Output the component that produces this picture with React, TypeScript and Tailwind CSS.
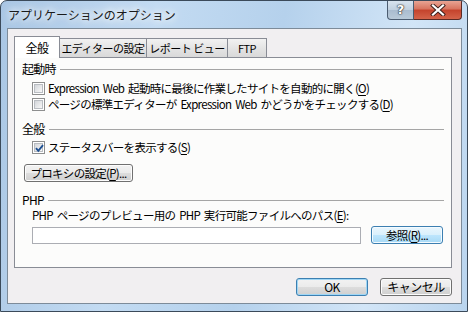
import React from 'react';

// mnemonic letter, underlined like a Win32 dialog
const U = ({ c }: { c: string }) => <span className="underline underline-offset-[2px] decoration-1">{c}</span>;

const CheckBox = ({ checked }: { checked?: boolean }) => (
  <span className="relative w-[13px] h-[13px] shrink-0 border border-[#8e8f8f] bg-white p-[1px]">
    <span className="block w-full h-full border border-[#b9bdc2] bg-gradient-to-br from-[#d3d6da] to-[#f8f8f8]" />
    {checked && (
      <svg className="absolute inset-0" width="13" height="13" viewBox="0 0 13 13">
        <path d="M3 6.2 L5.3 8.8 L10 3.2" stroke="#1d4f91" strokeWidth="1.9" fill="none" />
      </svg>
    )}
  </span>
);

const Section = ({ label, className }: { label: string; className?: string }) => (
  <div className={`flex items-center h-[16px] pl-[7px] pr-[7px] ${className ?? ''}`}>
    <span className="whitespace-nowrap text-[12px]">{label}</span>
    <span className="flex-1 h-px bg-[#a5a5a5] ml-[4px]" />
  </div>
);

const Btn = ({ children, className }: { children: React.ReactNode; className?: string }) => (
  <div
    className={`flex items-center justify-center whitespace-nowrap h-[18px] rounded-[3px] border border-[#707070] bg-[linear-gradient(#f2f2f2_0%,#ebebeb_50%,#dddddd_50%,#cfcfcf_100%)] shadow-[inset_0_0_0_1px_#fcfcfc] ${className ?? ''}`}
  >
    {children}
  </div>
);

const Tab = ({ label, selected, className }: { label: string; selected?: boolean; className?: string }) =>
  selected ? (
    <div className={`relative z-10 -mb-px h-[22px] flex items-center justify-center whitespace-nowrap text-[12px] border border-b-0 border-[#898c95] bg-white ${className ?? ''}`}>
      {label}
    </div>
  ) : (
    <div className={`h-[19px] -ml-px flex items-center justify-center whitespace-nowrap text-[11px] border border-b-0 border-[#898c95] bg-[linear-gradient(#f2f2f2,#e3e3e3_55%,#d9d9d9)] ${className ?? ''}`}>
      {label}
    </div>
  );

export default function App() {
  return (
    <div className="w-[468px] h-[312px] flex flex-col overflow-hidden rounded-t-[7px] border border-[#3b4a5a] bg-[linear-gradient(100deg,#a9c6e4_0%,#c3dbf2_30%,#b5d1ec_55%,#d2e5f7_80%,#b9d4ee_100%)] text-[12px] leading-[14px] text-black font-['Noto_Sans_CJK_JP','Noto_Sans',sans-serif]">
      {/* title bar */}
      <div className="h-[27px] flex items-start justify-between shrink-0">
        <div className="pl-[7px] pt-[7px] text-[12px] leading-[14px] text-[#1a1a1a] [text-shadow:0_0_6px_#fff,0_0_10px_#fff,0_0_14px_#fff]">
          アプリケーションのオプション
        </div>
        <div className="flex mr-[5px] h-[19px]">
          <div className="w-[27px] h-full flex items-center justify-center rounded-bl-[4px] border border-t-0 border-[#4b5c70] bg-[linear-gradient(#d8e3ee,#c1d0df_50%,#a9bccf_50%,#b9cad9)] text-white font-bold text-[13px] [text-shadow:0_0_1px_#333,0_0_1px_#333,0_0_2px_#333] font-['DejaVu_Sans',sans-serif]">
            ?
          </div>
          <div className="w-[48px] h-full flex items-center justify-center rounded-br-[4px] border border-l-0 border-t-0 border-[#5a2a24] bg-[linear-gradient(#e8a493,#d7735e_45%,#c4432c_50%,#d4634a)]">
            <svg width="16" height="12" viewBox="0 0 16 12">
              <path d="M3 1.5 L13 10.5 M13 1.5 L3 10.5" stroke="#3a1e1a" strokeWidth="4" strokeLinecap="square" />
              <path d="M3 1.5 L13 10.5 M13 1.5 L3 10.5" stroke="#ffffff" strokeWidth="2.2" strokeLinecap="square" />
            </svg>
          </div>
        </div>
      </div>

      {/* client area */}
      <div className="ml-[6px] mr-[5px] h-[276px] shrink-0 border border-[#7d8b99] bg-[#f1eff1] flex flex-col pl-[6px] pt-[7px] tracking-[-0.5px]">
        {/* tabs */}
        <div className="flex items-end h-[21px]">
          <Tab label="全般" selected className="w-[46px]" />
          <Tab label="エディターの設定" className="w-[88px]" />
          <Tab label="レポート ビュー" className="w-[82px]" />
          <Tab label="FTP" className="w-[40px]" />
        </div>

        {/* tab panel */}
        <div className="w-[438px] h-[211px] border border-[#898c95] bg-[#fcfcfb] flex flex-col text-[11.5px] tracking-[-0.7px] [word-spacing:2px]">
          <Section label="起動時" className="mt-[3px]" />
          <div className="flex items-center h-[16px] mt-[3px] pl-[17px] gap-[3px] whitespace-nowrap">
            <CheckBox />
            <span>Expression Web 起動時に最後に作業したサイトを自動的に開く(<U c="O" />)</span>
          </div>
          <div className="flex items-center h-[16px] pl-[17px] gap-[3px] whitespace-nowrap">
            <CheckBox />
            <span>ページの標準エディターが Expression Web かどうかをチェックする(<U c="D" />)</span>
          </div>

          <Section label="全般" className="mt-[9px]" />
          <div className="flex items-center h-[16px] mt-[2px] pl-[17px] gap-[3px] whitespace-nowrap">
            <CheckBox checked />
            <span>ステータスバーを表示する(<U c="S" />)</span>
          </div>
          <div className="pl-[9px] mt-[9px]">
            <Btn className="w-[109px]">
              <span>プロキシの設定(<U c="P" />)...</span>
            </Btn>
          </div>

          <Section label="PHP" className="mt-[10px]" />
          <div className="h-[14px] pl-[17px] whitespace-nowrap">
            PHP ページのプレビュー用の PHP 実行可能ファイルへのパス(<U c="E" />):
          </div>
          <div className="flex items-center h-[18px] mt-[4px] pl-[17px] gap-[10px]">
            <div className="w-[329px] h-[17px] border border-[#abadb3] bg-white" />
            <div className="w-[72px] h-[18px] flex items-center justify-center whitespace-nowrap rounded-[3px] border border-[#3c7fb1] bg-[linear-gradient(#eaf6fd_0%,#d9f0fc_50%,#bee6fd_50%,#a7d9f5_100%)] shadow-[inset_0_0_0_1px_#f4fbff]">
              <span>参照(<U c="R" />)...</span>
            </div>
          </div>
        </div>

        {/* dialog buttons */}
        <div className="flex mt-[10px] w-[438px] justify-end gap-[12px]">
          <div className="w-[72px] h-[18px] flex items-center justify-center rounded-[3px] border border-[#3c7fb1] bg-[linear-gradient(#f2f2f2_0%,#ebebeb_50%,#dddddd_50%,#cfcfcf_100%)] shadow-[inset_0_0_0_1px_#9fd6f5]">
            OK
          </div>
          <Btn className="w-[72px]">キャンセル</Btn>
        </div>
      </div>
    </div>
  );
}
